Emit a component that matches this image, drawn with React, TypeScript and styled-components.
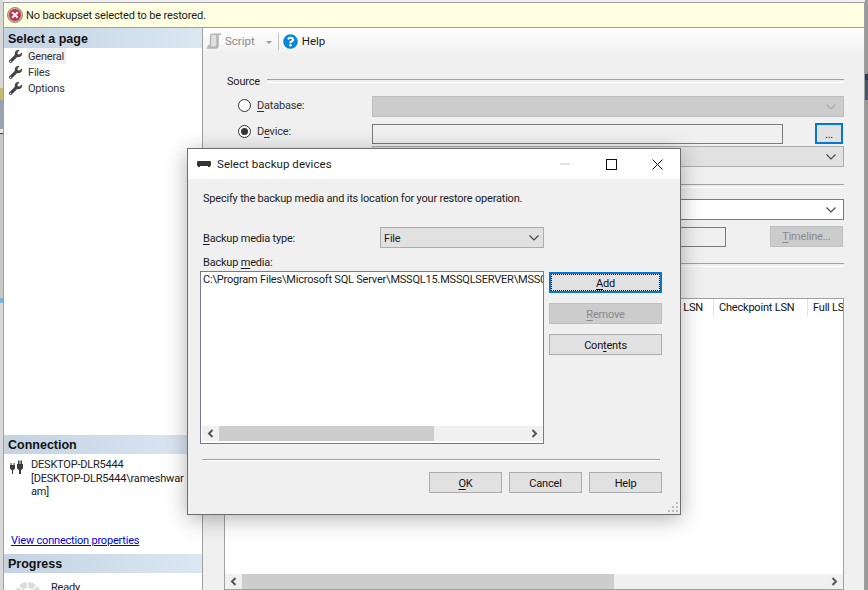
import React from "react";
import styled, { createGlobalStyle, css } from "styled-components";
import { FaWrench, FaQuestionCircle } from "react-icons/fa";

const FONT = `Roboto, "Liberation Sans", Arial, sans-serif`;
const HEAD_FONT = `"Liberation Sans", Arial, sans-serif`;

const Global = createGlobalStyle`
  html, body { margin: 0; padding: 0; background: #f0f0f0; }
  * { box-sizing: border-box; }
`;

const Screen = styled.div`
  width: 868px;
  height: 590px;
  position: relative;
  overflow: hidden;
  display: flex;
  font: 11px/16px ${FONT};
  letter-spacing: -0.2px;
  color: #1c1c1c;
  background: #f0f0f0;
`;

const LeftEdge = styled.div`
  width: 3px;
  flex: none;
  background: linear-gradient(
    to bottom,
    #d8d8d8 0 88px,
    #c9b76e 88px 100px,
    #98a2b2 100px 129px,
    #e8e8e8 129px 133px,
    #3a3a3a 133px 134px,
    #c8c8c8 134px 298px,
    #7fb0dc 298px 303px,
    #d8d8d8 303px
  );
`;

const RightEdge = styled.div`
  width: 3px;
  flex: none;
  background: linear-gradient(
    to bottom,
    #9a9a9a 0 74px,
    #2a3b57 74px 80px,
    #43566f 80px 100px,
    #9a9a9a 100px
  );
`;

const Window = styled.div`
  flex: 1;
  min-width: 0;
  margin-top: 2px;
  display: flex;
  flex-direction: column;
  border: 1px solid #a0a0a0;
  border-bottom: 0;
`;

const Banner = styled.div`
  height: 25px;
  flex: none;
  display: flex;
  align-items: center;
  gap: 3px;
  padding-left: 3px;
  background: #ffffe1;
  border-bottom: 1px solid #a0a0a0;
`;

const LowText = styled.span`
  padding-top: 2px;
`;

const BannerText = styled(LowText)`
  letter-spacing: -0.15px;
`;

const Columns = styled.div`
  flex: 1;
  min-height: 0;
  display: flex;
`;

const Sidebar = styled.aside`
  width: 199px;
  flex: none;
  display: flex;
  flex-direction: column;
  background: #fff;
  border-right: 1px solid #a0a0a0;
`;

const SideHead = styled.div<{ $h: number }>`
  height: ${(p) => p.$h}px;
  flex: none;
  padding-left: 4px;
  line-height: ${(p) => p.$h + 2}px;
  font-family: ${HEAD_FONT};
  font-weight: 700;
  font-size: 12.5px;
  letter-spacing: 0;
  color: #111;
  background: linear-gradient(to right, #c3d3e3, #dbe7f3);
`;

const PageItem = styled.div`
  height: 16px;
  display: flex;
  align-items: center;
  padding-left: 5px;
  gap: 5px;
  color: #333;
  svg { color: #444; flex: none; }
`;

const PageLabel = styled.span<{ $active?: boolean }>`
  height: 16px;
  padding: 0 2px 0 1px;
  line-height: 18px;
  ${(p) => p.$active && css`background: #f0f0f0;`}
`;

const ConnSection = styled.div`
  margin-top: auto;
  display: flex;
  flex-direction: column;
`;

const ConnBody = styled.div`
  height: 100px;
  display: flex;
  flex-direction: column;
  padding: 3px 0 5px 5px;
`;

const ConnInfo = styled.div`
  display: flex;
  gap: 7px;
  svg { flex: none; margin-top: 3px; }
`;

const ConnText = styled.div`
  line-height: 13.5px;
  margin-top: 1px;
  white-space: nowrap;
`;

const ConnLink = styled.a`
  margin-top: auto;
  padding-left: 2px;
  color: #0000e6;
  text-decoration: underline;
`;

const ProgressBody = styled.div`
  height: 17px;
  overflow: hidden;
  display: flex;
  padding: 7px 0 0 11px;
  gap: 10px;
  svg { flex: none; margin-top: 2px; }
`;

const Main = styled.main`
  flex: 1;
  min-width: 0;
  display: flex;
  flex-direction: column;
  background: #f0f0f0;
`;

const Toolbar = styled.div`
  height: 27px;
  flex: none;
  display: flex;
  align-items: center;
  padding: 0 0 1px 4px;
  background: linear-gradient(to bottom, #ffffff, #f0f0f0);
`;

const ToolText = styled.span<{ $muted?: boolean }>`
  margin-left: ${(p) => (p.$muted ? 3 : 4)}px;
  font-size: 11.5px;
  letter-spacing: 0;
  color: ${(p) => (p.$muted ? "#8b8b8b" : "#1c1c1c")};
`;

const ToolDivider = styled.span`
  width: 1px;
  height: 17px;
  margin: 0 4px 0 6px;
  background: #c4c4c4;
`;

const Caret = styled.span`
  width: 0;
  height: 0;
  margin-left: 11px;
  border: 3px solid transparent;
  border-top: 3px solid #9a9a9a;
  border-bottom: 0;
  margin-top: 2px;
`;

const Form = styled.div`
  flex: 1;
  min-height: 0;
  display: flex;
  flex-direction: column;
  padding: 18px 20px 0 21px;
`;

const Section = styled.div<{ $top?: number }>`
  height: 16px;
  flex: none;
  display: flex;
  align-items: center;
  gap: 7px;
  padding-left: 3px;
  margin-top: ${(p) => p.$top ?? 0}px;
  &::after {
    content: "";
    flex: 1;
    height: 2px;
    border-top: 1px solid #a0a0a0;
    border-bottom: 1px solid #fff;
  }
`;

const FieldRow = styled.div<{ $top: number }>`
  display: grid;
  grid-template-columns: 148px 1fr;
  align-items: center;
  margin-top: ${(p) => p.$top}px;
  height: 21px;
  flex: none;
`;

const RadioLabel = styled.label<{ $lift: number }>`
  display: flex;
  align-items: center;
  gap: 6px;
  padding-left: 14px;
  margin-bottom: ${(p) => p.$lift}px;
  color: #333;
`;

const Radio = styled.span<{ $on?: boolean }>`
  width: 13px;
  height: 13px;
  border-radius: 50%;
  border: 1px solid #333;
  background: #fff;
  display: flex;
  align-items: center;
  justify-content: center;
  &::after {
    content: "";
    width: 7px;
    height: 7px;
    border-radius: 50%;
    background: ${(p) => (p.$on ? "#333" : "transparent")};
  }
`;

const U = styled.span`
  text-decoration: underline;
  text-underline-offset: 2px;
`;

const comboTone = {
  disabled: css`background: #cccccc; border-color: #bfbfbf; svg { stroke: #a8a8a8; }`,
  plain: css`background: #e1e1e1; border-color: #adadad; svg { stroke: #444; }`,
  white: css`background: #fff; border-color: #7a7a7a; svg { stroke: #444; }`,
};

const Combo = styled.div<{ $tone: keyof typeof comboTone }>`
  height: 21px;
  display: flex;
  align-items: center;
  justify-content: space-between;
  padding: 0 7px 0 4px;
  border: 1px solid;
  ${(p) => comboTone[p.$tone]}
`;

const Chevron = () => (
  <svg width="10" height="6" viewBox="0 0 10 6" fill="none" strokeWidth="1.1">
    <path d="M.5.5 5 5 9.5.5" />
  </svg>
);

const DeviceField = styled.div`
  display: flex;
  align-items: flex-start;
  justify-content: space-between;
  padding-right: 1px;
`;

const TextBox = styled.div<{ $w: number }>`
  width: ${(p) => p.$w}px;
  height: 20px;
  margin-top: 1px;
  background: #f0f0f0;
  border: 1px solid #7a7a7a;
`;

const buttonTone = {
  plain: css`background: #e1e1e1; border: 1px solid #adadad; color: #111;`,
  off: css`background: #cccccc; border: 1px solid #bfbfbf; color: #8a8a8a;`,
  focus: css`background: #e1e1e1; border: 2px solid #0078d7; color: #111;`,
};

const Button = styled.div<{ $tone?: keyof typeof buttonTone; $w?: number }>`
  flex: none;
  width: ${(p) => (p.$w ? `${p.$w}px` : "100%")};
  height: 21px;
  display: flex;
  align-items: center;
  justify-content: center;
  padding-top: 1px;
  line-height: 17px;
  ${(p) => buttonTone[p.$tone ?? "plain"]}
`;

const FlatButton = styled(Button)`
  padding-top: 0;
`;

const Dotted = styled.span`
  flex: 1;
  align-self: stretch;
  text-align: center;
  border: 1px dotted #000;
  line-height: 17px;
`;

const Table = styled.div`
  margin-top: 25px;
  flex: 1;
  min-height: 0;
  display: flex;
  flex-direction: column;
  background: #fff;
  border: 1px solid #a0a0a0;
`;

const TableHead = styled.div`
  height: 18px;
  flex: none;
  display: flex;
  overflow: hidden;
  white-space: nowrap;
`;

const HeadCell = styled.div<{ $w: number; $end?: boolean }>`
  width: ${(p) => p.$w}px;
  flex: none;
  padding: 1px 5px 0;
  text-align: ${(p) => (p.$end ? "right" : "left")};
  border-right: 1px solid #e4e4e4;
  color: #111;
  ${(p) => p.$end && css`padding-right: 10px;`}
`;

const TableFill = styled.div`
  flex: 1;
`;

const ScrollBar = styled.div`
  height: 15px;
  flex: none;
  display: flex;
  background: #f0f0f0;
`;

const ScrollArrow = styled.span<{ $w: number }>`
  width: ${(p) => p.$w}px;
  flex: none;
  display: flex;
  align-items: center;
  justify-content: center;
`;

const ScrollThumb = styled.span<{ $w: number }>`
  width: ${(p) => p.$w}px;
  flex: none;
  background: #cdcdcd;
`;

const ScrollGap = styled.span`
  flex: 1;
`;

const Arrow = ({ right }: { right?: boolean }) => (
  <svg width="7" height="9" viewBox="0 0 7 9" fill="none" stroke="#555" strokeWidth="2">
    <path d={right ? "M1.5 1 5 4.5 1.5 8" : "M5.5 1 2 4.5 5.5 8"} />
  </svg>
);

const Dialog = styled.section`
  position: absolute;
  left: 187px;
  top: 148px;
  width: 494px;
  height: 367px;
  display: flex;
  flex-direction: column;
  background: #f0f0f0;
  border: 1px solid #6e6e6e;
  box-shadow: 0 4px 20px rgba(0, 0, 0, 0.3);
`;

const TitleBar = styled.header`
  height: 30px;
  flex: none;
  display: flex;
  align-items: center;
  padding-left: 9px;
  background: #fff;
`;

const TitleText = styled.span`
  flex: 1;
  margin-left: 6px;
  font-size: 11.5px;
  letter-spacing: 0.05px;
`;

const Caption = styled.span`
  width: 46px;
  height: 30px;
  display: flex;
  align-items: center;
  justify-content: center;
`;

const Intro = styled.p`
  margin: 12px 0 0 15px;
  line-height: 16px;
`;

const TypeRow = styled.div`
  display: flex;
  align-items: center;
  margin: 20px 0 0 15px;
  height: 21px;
`;

const TypeLabel = styled(LowText)`
  width: 177px;
  flex: none;
`;

const TypeCombo = styled(Combo)`
  width: 164px;
  padding-left: 3px;
  padding-right: 4px;
`;

const MediaLabel = styled.div`
  height: 16px;
  margin: 6px 0 0 15px;
  line-height: 18px;
`;

const MediaRow = styled.div`
  display: flex;
  gap: 5px;
  margin: 1px 0 0 12px;
`;

const MediaList = styled.div`
  width: 344px;
  height: 173px;
  flex: none;
  display: flex;
  flex-direction: column;
  padding: 0 0 2px 1px;
  background: #fff;
  border: 1px solid #7a7a8a;
`;

const MediaPath = styled.div`
  flex: 1;
  padding: 0 0 0 1px;
  white-space: nowrap;
  overflow: hidden;
`;

const MediaActions = styled.div`
  width: 113px;
  flex: none;
  display: flex;
  flex-direction: column;
  gap: 10px;
  padding-top: 1px;
`;

const Rule = styled.hr`
  width: 458px;
  height: 2px;
  margin: 15px 0 0 14px;
  border: 0;
  border-top: 1px solid #a0a0a0;
  border-bottom: 1px solid #fff;
`;

const Footer = styled.footer`
  display: flex;
  justify-content: flex-end;
  gap: 7px;
  margin-top: 11px;
  padding-right: 18px;
`;

const Grip = styled.svg`
  position: absolute;
  right: 1px;
  bottom: 1px;
`;

const ErrorIcon = () => (
  <svg width="16" height="16" viewBox="0 0 16 16">
    <circle cx="8" cy="8" r="7.6" fill="#b9b4b4" stroke="#7c7272" strokeWidth=".7" />
    <circle cx="8" cy="8" r="5.9" fill="#c9303e" />
    <path d="M5.2 5.2 10.8 10.8M10.8 5.2 5.2 10.8" stroke="#fff" strokeWidth="2" />
  </svg>
);

const ScriptIcon = () => (
  <svg width="15" height="16" viewBox="0 0 15 16" fill="none" stroke="#b4b4b4">
    <rect x="4" y="2" width="7" height="11" fill="#e0e0e0" stroke="none" />
    <path d="M3.500 13V3C3.500 2 4 1.200 5 1.200H14" strokeWidth="1.500" />
    <path d="M10.500 2V12.500C10.500 13.800 10 14.500 9 14.500H1.500C1.500 13.500 2 13 3 13" strokeWidth="2.500" />
  </svg>
);

const PlugIcon = () => (
  <svg width="15" height="15" viewBox="0 0 15 15" fill="#3a3a3a">
    <path d="M1 5h5v3.500L4 10.500V14H3v-3.500L1 8.500Z" />
    <path d="M1.500 3h1v2h-1zM4.500 3h1v2h-1z" />
    <path d="M8 4h6v4.500L12 10v4h-2v-4L8 8.500Z" />
    <path d="M9 .5h1.500V4H9zM11.500.5H13V4h-1.500z" />
  </svg>
);

const DeviceIcon = () => (
  <svg width="14" height="8" viewBox="0 0 14 8" fill="#333">
    <rect x="0" y="1" width="14" height="5" rx="1" />
    <rect x="1" y="6" width="2" height="1" />
    <rect x="11" y="6" width="2" height="1" />
  </svg>
);

const Spinner = () => (
  <svg width="26" height="26" viewBox="0 0 26 26" fill="none">
    <circle cx="13" cy="13" r="10" stroke="#dcdcdc" strokeWidth="6" strokeDasharray="6.500 1.350" />
  </svg>
);

const Minimize = () => (
  <svg width="10" height="2" viewBox="0 0 10 2"><path d="M0 1h10" stroke="#c8c8c8" /></svg>
);
const Maximize = () => (
  <svg width="11" height="11" viewBox="0 0 11 11" fill="none"><rect x=".5" y=".5" width="10" height="10" stroke="#111" /></svg>
);
const Close = () => (
  <svg width="11" height="11" viewBox="0 0 11 11" fill="none"><path d="M.5.500 10.500 10.500M10.500.500.500 10.500" stroke="#111" /></svg>
);

const pages = ["General", "Files", "Options"];

export default function App() {
  return (
    <Screen>
      <Global />
      <LeftEdge />
      <Window>
        <Banner>
          <ErrorIcon />
          <BannerText>No backupset selected to be restored.</BannerText>
        </Banner>
        <Columns>
          <Sidebar>
            <SideHead $h={20}>Select a page</SideHead>
            {pages.map((p, i) => (
              <PageItem key={p}>
                <FaWrench size={13} />
                <PageLabel $active={i === 0}>{p}</PageLabel>
              </PageItem>
            ))}
            <ConnSection>
              <SideHead $h={19}>Connection</SideHead>
              <ConnBody>
                <ConnInfo>
                  <PlugIcon />
                  <ConnText>
                    DESKTOP-DLR5444
                    <br />
                    [DESKTOP-DLR5444\rameshwar
                    <br />
                    am]
                  </ConnText>
                </ConnInfo>
                <ConnLink>View connection properties</ConnLink>
              </ConnBody>
              <SideHead $h={19}>Progress</SideHead>
              <ProgressBody>
                <Spinner />
                <span>Ready</span>
              </ProgressBody>
            </ConnSection>
          </Sidebar>
          <Main>
            <Toolbar>
              <ScriptIcon />
              <ToolText $muted>Script</ToolText>
              <Caret />
              <ToolDivider />
              <FaQuestionCircle size={15} color="#0a86d6" />
              <ToolText>Help</ToolText>
            </Toolbar>
            <Form>
              <Section><LowText>Source</LowText></Section>
              <FieldRow $top={7}>
                <RadioLabel $lift={2}>
                  <Radio />
                  <span><U>D</U>atabase:</span>
                </RadioLabel>
                <Combo $tone="disabled"><span /><Chevron /></Combo>
              </FieldRow>
              <FieldRow $top={5}>
                <RadioLabel $lift={5}>
                  <Radio $on />
                  <LowText>D<U>e</U>vice:</LowText>
                </RadioLabel>
                <DeviceField>
                  <TextBox $w={411} />
                  <Button $tone="focus" $w={28}>...</Button>
                </DeviceField>
              </FieldRow>
              <FieldRow $top={3}>
                <span />
                <Combo $tone="plain"><span /><Chevron /></Combo>
              </FieldRow>
              <Section $top={11}><LowText>Destination</LowText></Section>
              <FieldRow $top={5}>
                <span />
                <Combo $tone="white"><span /><Chevron /></Combo>
              </FieldRow>
              <FieldRow $top={6}>
                <span />
                <DeviceField>
                  <TextBox $w={354} />
                  <FlatButton $tone="off" $w={73}><span><U>T</U>imeline...</span></FlatButton>
                </DeviceField>
              </FieldRow>
              <Section $top={10}><LowText>Restore plan</LowText></Section>
              <Table>
                <TableHead>
                  <HeadCell $w={489} $end>Last LSN</HeadCell>
                  <HeadCell $w={94}>Checkpoint LSN</HeadCell>
                  <HeadCell $w={100}>Full LSN</HeadCell>
                </TableHead>
                <TableFill />
                <ScrollBar>
                  <ScrollArrow $w={17}><Arrow /></ScrollArrow>
                  <ScrollThumb $w={372} />
                  <ScrollGap />
                  <ScrollArrow $w={17}><Arrow right /></ScrollArrow>
                </ScrollBar>
              </Table>
            </Form>
          </Main>
        </Columns>
      </Window>
      <RightEdge />
      <Dialog>
        <TitleBar>
          <DeviceIcon />
          <TitleText>Select backup devices</TitleText>
          <Caption><Minimize /></Caption>
          <Caption><Maximize /></Caption>
          <Caption><Close /></Caption>
        </TitleBar>
        <Intro>Specify the backup media and its location for your restore operation.</Intro>
        <TypeRow>
          <TypeLabel><U>B</U>ackup media type:</TypeLabel>
          <TypeCombo $tone="plain"><LowText>File</LowText><Chevron /></TypeCombo>
        </TypeRow>
        <MediaLabel>Backup <U>m</U>edia:</MediaLabel>
        <MediaRow>
          <MediaList>
            <MediaPath>C:\Program Files\Microsoft SQL Server\MSSQL15.MSSQLSERVER\MSSQL\Backup</MediaPath>
            <ScrollBar>
              <ScrollArrow $w={17}><Arrow /></ScrollArrow>
              <ScrollThumb $w={215} />
              <ScrollGap />
              <ScrollArrow $w={17}><Arrow right /></ScrollArrow>
            </ScrollBar>
          </MediaList>
          <MediaActions>
            <FlatButton $tone="focus"><Dotted><U>A</U>dd</Dotted></FlatButton>
            <Button $tone="off"><span><U>R</U>emove</span></Button>
            <Button><span>Con<U>t</U>ents</span></Button>
          </MediaActions>
        </MediaRow>
        <Rule />
        <Footer>
          <Button $w={73}><span><U>O</U>K</span></Button>
          <Button $w={73}>Cancel</Button>
          <Button $w={73}>Help</Button>
        </Footer>
        <Grip width="11" height="11" viewBox="0 0 11 11" fill="#bdbdbd">
          <rect x="8" y="0" width="2" height="2" />
          <rect x="4" y="4" width="2" height="2" />
          <rect x="8" y="4" width="2" height="2" />
          <rect x="0" y="8" width="2" height="2" />
          <rect x="4" y="8" width="2" height="2" />
          <rect x="8" y="8" width="2" height="2" />
        </Grip>
      </Dialog>
    </Screen>
  );
}
